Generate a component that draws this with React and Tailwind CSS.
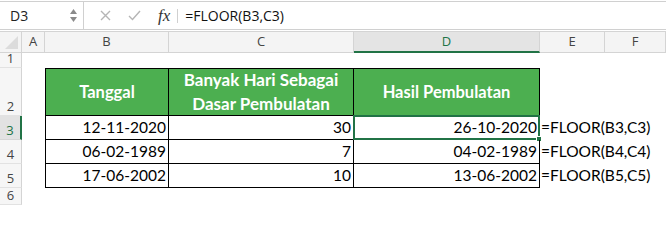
import React from 'react';

const cols = ['A', 'B', 'C', 'D', 'E', 'F'];

const rows = [
  { tgl: '12-11-2020', hari: '30', hasil: '26-10-2020', rumus: '=FLOOR(B3,C3)' },
  { tgl: '06-02-1989', hari: '7', hasil: '04-02-1989', rumus: '=FLOOR(B4,C4)' },
  { tgl: '17-06-2002', hari: '10', hasil: '13-06-2002', rumus: '=FLOOR(B5,C5)' },
];

function RowHead({ n, active }) {
  return (
    <div
      className={
        active
          ? 'flex items-end justify-center pb-[2px] bg-[#e2e2e2] border-r-2 border-r-[#217346] border-b border-b-[#d6d6d6] text-[#217346] text-[13px] leading-none'
          : 'flex items-end justify-center pb-[2px] bg-[#f6f6f6] border-r border-r-[#d4d4d4] border-b border-b-[#e2e2e2] text-[#444] text-[13px] leading-none'
      }>
      {n}
    </div>
  );
}

export default function App() {
  return (
    <div className="w-[666px] h-[205px] overflow-hidden bg-white pt-[1px] font-['Open_Sans',sans-serif]">
      {/* formula bar */}
      <div className="h-[29px] flex items-stretch border-t border-b border-[#d0d0d0]">
        <div className="w-[84px] flex items-center justify-between pl-[10px] pr-[6px] border-r border-[#d0d0d0]">
          <span className="text-[14px] text-[#222]">D3</span>
          <div className="flex flex-col items-center gap-[3px]">
            <svg width="7" height="5" viewBox="0 0 7 5">
              <polygon points="3.5,0 7,5 0,5" fill="#8a8a8a" />
            </svg>
            <svg width="7" height="5" viewBox="0 0 7 5">
              <polygon points="0,0 7,0 3.5,5" fill="#8a8a8a" />
            </svg>
          </div>
        </div>
        <div className="flex items-center pl-[16px]">
          <svg width="11" height="11" viewBox="0 0 11 11">
            <path d="M1 1 L10 10 M10 1 L1 10" stroke="#b5b5b5" strokeWidth="1.4" />
          </svg>
          <svg width="13" height="11" viewBox="0 0 13 11" className="ml-[17px]">
            <path d="M1 6 L4.5 9.5 L12 1" stroke="#b5b5b5" strokeWidth="1.4" fill="none" />
          </svg>
          <span className="ml-[17px] font-['Liberation_Serif',serif] italic text-[17px] text-[#333] leading-none">
            fx
          </span>
          <div className="ml-[7px] w-px h-[14px] bg-[#d0d0d0]" />
          <span className="ml-[7px] text-[14px] text-[#111]">=FLOOR(B3,C3)</span>
        </div>
      </div>

      {/* sheet */}
      <div className="mt-[1px] grid grid-cols-[22px_23px_124px_185px_186px_65px_61px] grid-rows-[22px_15px_48px_24px_24px_24px_17px]">
        {/* column headers */}
        <div className="relative bg-[#f4f4f4] border-t border-b border-r border-[#d4d4d4]">
          <svg width="13" height="13" viewBox="0 0 13 13" className="absolute right-[3px] bottom-[3px]">
            <polygon points="13,0 13,13 0,13" fill="#dcdcdc" />
          </svg>
        </div>
        {cols.map((c) =>
          c === 'D' ? (
            <div
              key={c}
              className="flex items-center justify-center bg-[#e4e4e4] border-t border-t-[#d4d4d4] border-r border-r-[#d4d4d4] border-b-2 border-b-[#217346] text-[13px] text-[#217346]">
              {c}
            </div>
          ) : (
            <div
              key={c}
              className="flex items-center justify-center bg-[#f4f4f4] border-t border-b border-r border-[#d4d4d4] text-[13px] text-[#444]">
              {c}
            </div>
          )
        )}

        {/* row 1 */}
        <RowHead n="1" />
        <div className="col-span-6" />

        {/* row 2 header */}
        <RowHead n="2" />
        <div />
        <div className="flex items-center justify-center bg-[#4caf50] border border-black font-['Lato',sans-serif] font-bold text-[16.5px] text-white">
          Tanggal
        </div>
        <div className="flex items-center justify-center bg-[#4caf50] border-t border-r border-b border-black font-['Lato',sans-serif] font-bold text-[17px] leading-[24px] text-white text-center">
          Banyak Hari Sebagai
          <br />
          Dasar Pembulatan
        </div>
        <div className="flex items-center justify-center bg-[#4caf50] border-t border-r border-b border-black font-['Lato',sans-serif] font-bold text-[16.5px] text-white">
          Hasil Pembulatan
        </div>
        <div />
        <div />

        {rows.map((r, i) => (
          <React.Fragment key={r.tgl}>
            <RowHead n={String(i + 3)} active={i === 0} />
            <div />
            <div className="flex items-center justify-end pr-[2px] border-l border-r border-b border-black font-['Lato',sans-serif] text-[15.5px] text-black">
              {r.tgl}
            </div>
            <div className="flex items-center justify-end pr-[2px] border-r border-b border-black font-['Lato',sans-serif] text-[15.5px] text-black">
              {r.hari}
            </div>
            <div className="relative flex items-center justify-end pr-[2px] border-r border-b border-black font-['Lato',sans-serif] text-[15.5px] text-black">
              {r.hasil}
              {i === 0 && (
                <div className="absolute left-[-1px] top-[-1px] right-[-1px] bottom-[-1px] border-2 border-[#217346]">
                  <div className="absolute right-[-4px] bottom-[-4px] w-[6px] h-[6px] bg-[#217346] border border-white" />
                </div>
              )}
            </div>
            <div className="flex items-center pl-[1px] whitespace-nowrap font-['Lato',sans-serif] text-[15.5px] text-black">
              {r.rumus}
            </div>
            <div />
          </React.Fragment>
        ))}

        {/* row 6 */}
        <RowHead n="6" />
        <div className="col-span-6" />
      </div>
    </div>
  );
}
